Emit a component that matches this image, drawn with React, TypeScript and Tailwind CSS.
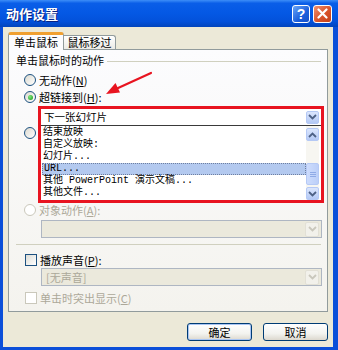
import React from "react";

function Chevron({ up = false, color = "#4d6185" }: { up?: boolean; color?: string }) {
  return (
    <svg width="9" height="6" viewBox="0 0 9 6">
      <polyline
        points={up ? "1,5 4.5,1.5 8,5" : "1,1 4.5,4.5 8,1"}
        fill="none"
        stroke={color}
        strokeWidth="1.8"
      />
    </svg>
  );
}

function DropBtn({ disabled = false, tall = false }: { disabled?: boolean; tall?: boolean }) {
  return (
    <div
      className={`${tall ? "w-[14px] h-[15px]" : "w-[13px] h-[13px]"} rounded-[2px] border flex items-center justify-center ${
        disabled
          ? "border-[#e2e0d6] bg-[#f2f1eb]"
          : "border-[#b5c9f5] bg-[linear-gradient(180deg,#dbe6fd,#b4c9f5)]"
      }`}
    >
      <Chevron color={disabled ? "#c9c7bc" : "#4d6185"} />
    </div>
  );
}

function Radio({ checked = false, disabled = false }: { checked?: boolean; disabled?: boolean }) {
  return (
    <div
      className={`w-[12px] h-[12px] shrink-0 rounded-full border flex items-center justify-center ${
        disabled
          ? "border-[#cac8bb] bg-white"
          : "border-[#1c5180] bg-[linear-gradient(135deg,#dcdad0,#ffffff)]"
      }`}
    >
      {checked && (
        <div className="w-[5px] h-[5px] rounded-full bg-[radial-gradient(circle_at_35%_35%,#7ee87e,#169416)]" />
      )}
    </div>
  );
}

function Check({ disabled = false }: { disabled?: boolean }) {
  return (
    <div
      className={`w-[12px] h-[12px] shrink-0 border ${
        disabled
          ? "border-[#cac8bb] bg-white"
          : "border-[#1c5180] bg-[linear-gradient(135deg,#dcdcd5,#ffffff)]"
      }`}
    />
  );
}

const listItems: { text: React.ReactNode; sel?: boolean }[] = [
  { text: "结束放映" },
  { text: "自定义放映:" },
  { text: "幻灯片..." },
  { text: "URL...", sel: true },
  { text: "其他 PowerPoint 演示文稿..." },
  { text: "其他文件..." },
];

export default function App() {
  return (
    <div className="relative w-[338px] h-[350px] overflow-hidden bg-[#0b4fd9] flex flex-col [font-family:'Noto_Sans_CJK_SC',sans-serif] text-[11px] leading-none text-black">
      {/* Title bar */}
      <div className="h-[27px] shrink-0 flex items-center pl-[6px] pr-[6px] bg-[linear-gradient(180deg,#3d8ef8_0%,#0a5ee8_12%,#0458e4_50%,#0351da_80%,#0244bc_100%)]">
        <span className="text-white font-bold text-[13px] [text-shadow:1px_1px_0_#0a2280]">动作设置</span>
        <div className="ml-auto flex gap-[3px]">
          <div className="w-[18px] h-[18px] rounded-[3px] border border-white bg-[linear-gradient(135deg,#6aa6f8,#1b5fdc_60%,#1550c8)] flex items-center justify-center text-white font-bold text-[14px] [font-family:'Liberation_Sans',sans-serif]">
            ?
          </div>
          <div className="w-[19px] h-[18px] rounded-[3px] border border-white bg-[linear-gradient(135deg,#f09070,#d9532a_55%,#c2401a)] flex items-center justify-center">
            <svg width="11" height="11" viewBox="0 0 11 11">
              <path d="M1.5 1.5 L9.5 9.5 M9.5 1.5 L1.5 9.5" stroke="white" strokeWidth="2.2" strokeLinecap="round" />
            </svg>
          </div>
        </div>
      </div>

      {/* Body */}
      <div className="ml-[3px] mr-[5px] mb-[3px] flex-1 bg-[#ece9d8] pl-[5px] pr-[5px] pt-[5px] flex flex-col">
        {/* Tabs */}
        <div className="flex items-end h-[17px] relative z-10">
          <div className="w-[56px] h-[18px] -mb-px bg-[#fcfcfe] border-x border-[#919b9c] border-t-[3px] border-t-[#f0a030] rounded-t-[3px] flex items-center justify-center">
            单击鼠标
          </div>
          <div className="w-[52px] h-[14px] bg-[linear-gradient(180deg,#ffffff,#ecebe5)] border-t border-r border-[#919b9c] rounded-tr-[3px] flex items-center justify-center">
            鼠标移过
          </div>
        </div>

        {/* Panel */}
        <div className="h-[263px] border border-[#919b9c] bg-[linear-gradient(180deg,#fcfcfe,#f4f3ee)] flex flex-col pt-[4px]">
          <div className="h-[12px] flex items-center pl-[7px]">
            <span>单击鼠标时的动作</span>
            <div className="flex-1 ml-[3px] mr-[6px] mt-[3px] h-px bg-[#d0d0bf]" />
          </div>

          <div className="mt-[8px] pl-[15px] h-[12px] flex items-center gap-[3px]">
            <Radio />
            <span>
              无动作(<span className="underline">N</span>)
            </span>
          </div>
          <div className="mt-[5px] pl-[15px] h-[12px] flex items-center gap-[3px]">
            <Radio checked />
            <span>
              超链接到(<span className="underline">H</span>):
            </span>
          </div>

          <div className="mt-[3px] pl-[15px] flex">
            <div className="w-[14px] pt-[21px]">
              <Radio />
            </div>
            <div className="w-[286px] h-[97px] border-[3px] border-[#e81420] bg-white flex flex-col text-[10.5px]">
              <div className="h-[16px] flex items-center pl-[3px] pr-[2px]">
                <span>下一张幻灯片</span>
                <div className="ml-auto">
                  <DropBtn />
                </div>
              </div>
              <div className="h-px bg-[#3a3a3a]" />
              <div className="flex-1 flex [font-family:'Liberation_Mono','Noto_Sans_CJK_SC',monospace] text-[10px]">
                <div className="flex-1 flex flex-col pt-[1px] pl-[1px]">
                  {listItems.map((it, i) => (
                    <div
                      key={i}
                      className={`h-[12px] flex items-center pl-[1px] whitespace-pre ${
                        it.sel ? "bg-[#b3c9ef] border border-dotted border-[#6f7f9f]" : ""
                      }`}
                    >
                      {it.text}
                    </div>
                  ))}
                </div>
                <div className="w-[13px] mr-[2px] bg-[#f7f6f1] flex flex-col pt-[2px]">
                  <div className="w-[13px] h-[13px] rounded-[2px] border border-[#b5c9f5] bg-[linear-gradient(180deg,#dbe6fd,#b4c9f5)] flex items-center justify-center">
                    <Chevron up />
                  </div>
                  <div className="mt-[22px] w-[13px] h-[22px] rounded-[2px] border border-[#b5c9f5] bg-[linear-gradient(90deg,#cddcfd,#bccff8)] flex flex-col items-center justify-center gap-[1px]">
                    <div className="w-[6px] h-px bg-[#8faae6]" />
                    <div className="w-[6px] h-px bg-[#8faae6]" />
                    <div className="w-[6px] h-px bg-[#8faae6]" />
                  </div>
                  <div className="mt-[2px] w-[13px] h-[13px] rounded-[2px] border border-[#b5c9f5] bg-[linear-gradient(180deg,#dbe6fd,#b4c9f5)] flex items-center justify-center">
                    <Chevron />
                  </div>
                </div>
              </div>
            </div>
          </div>

          <div className="mt-[1px] pl-[15px] h-[12px] flex items-center gap-[3px] text-[#aca899]">
            <Radio disabled />
            <span>
              对象动作(<span className="underline">A</span>):
            </span>
          </div>
          <div className="mt-[4px] ml-[32px] w-[281px] h-[18px] border border-[#aeb6c2] bg-[#ebe9dc] flex items-center justify-end pr-[2px]">
            <DropBtn disabled tall />
          </div>

          <div className="mt-[6px] ml-[7px] mr-[6px] h-px bg-[#d0d0bf]" />

          <div className="mt-[9px] pl-[16px] h-[12px] flex items-center gap-[3px]">
            <Check />
            <span>
              播放声音(<span className="underline">P</span>):
            </span>
          </div>
          <div className="mt-[2px] ml-[32px] w-[281px] h-[18px] border border-[#aeb6c2] bg-[#ebe9dc] flex items-center pl-[4px] pr-[2px] text-[#aca899]">
            <span>[无声音]</span>
            <div className="ml-auto">
              <DropBtn disabled tall />
            </div>
          </div>
          <div className="mt-[6px] pl-[16px] h-[12px] flex items-center gap-[3px] text-[#aca899]">
            <Check disabled />
            <span>
              单击时突出显示(<span className="underline">C</span>)
            </span>
          </div>
        </div>

        {/* Buttons */}
        <div className="mt-[11px] flex justify-end gap-[11px]">
          <div className="w-[65px] h-[18px] rounded-[3px] border border-[#003c74] bg-[linear-gradient(180deg,#ffffff,#f3f3ef_60%,#dcd8ce)] [box-shadow:inset_0_0_0_1px_#a9c5f3] flex items-center justify-center">
            确定
          </div>
          <div className="w-[65px] h-[18px] rounded-[3px] border border-[#003c74] bg-[linear-gradient(180deg,#ffffff,#f3f3ef_60%,#dcd8ce)] flex items-center justify-center">
            取消
          </div>
        </div>
      </div>

      {/* Annotation arrow */}
      <svg className="absolute left-0 top-0 pointer-events-none" width="338" height="350" viewBox="0 0 338 350">
        <line x1="151" y1="73" x2="117" y2="88.5" stroke="#e81420" strokeWidth="2.2" strokeLinecap="round" />
        <polygon points="106,94 120,92.5 115.5,83" fill="#e81420" />
      </svg>
    </div>
  );
}
